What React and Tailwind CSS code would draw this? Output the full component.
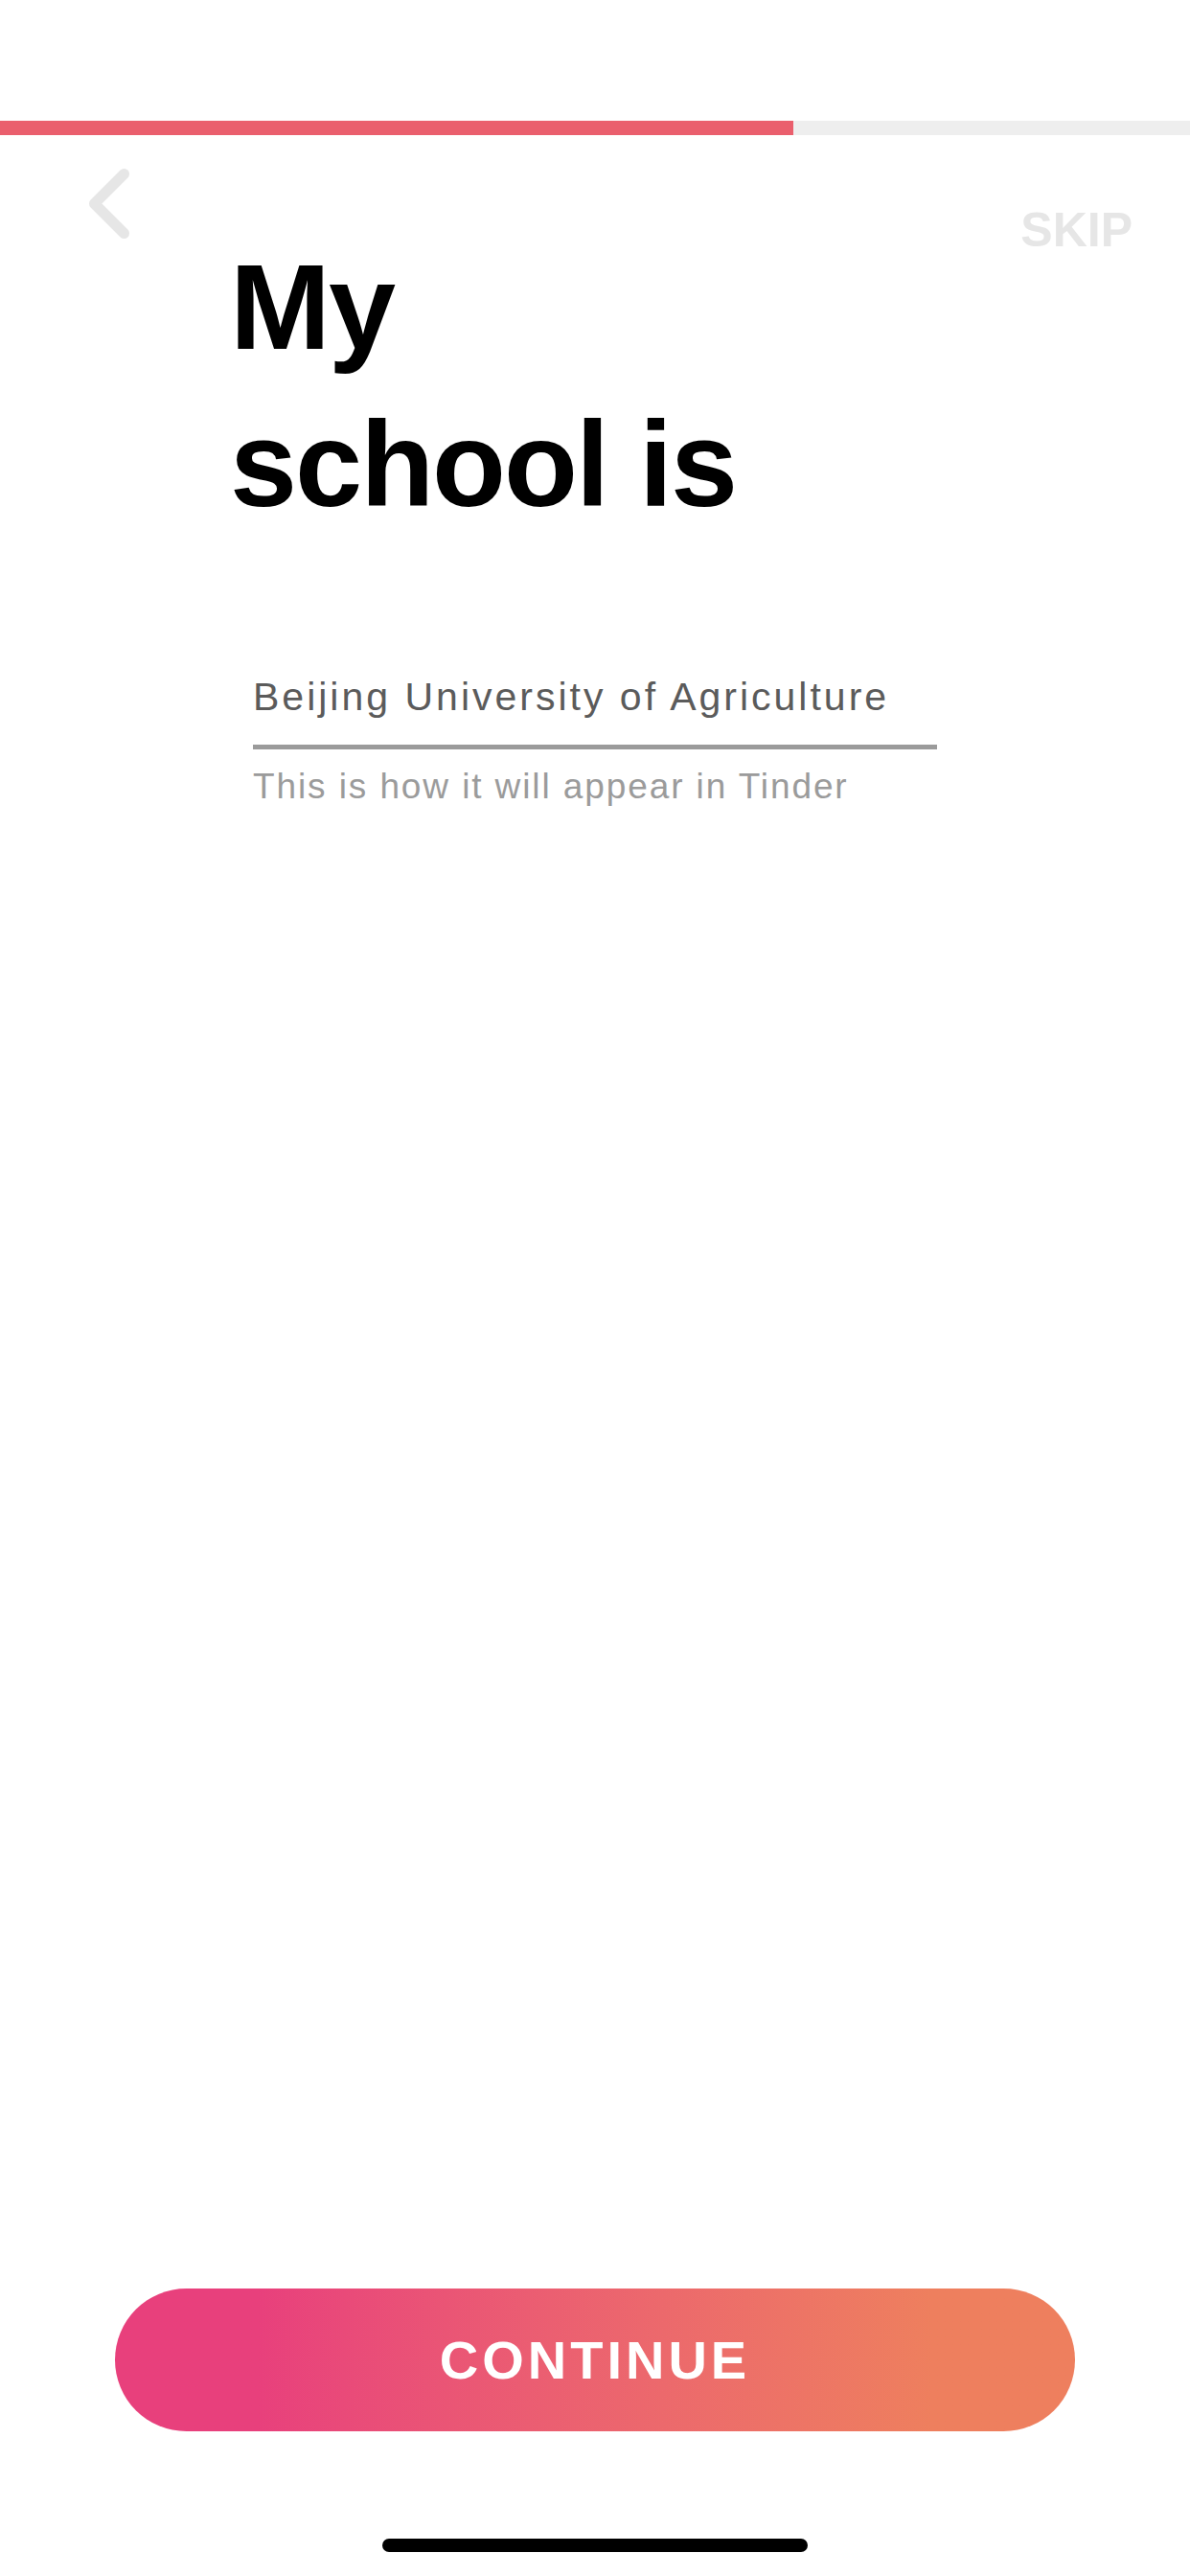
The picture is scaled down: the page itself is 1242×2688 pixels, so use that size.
import React from 'react';

export default function App() {
  const progress = 828;

  return (
    <div className="w-[1242px] h-[2688px] bg-white flex flex-col font-['Liberation_Sans',Arial,sans-serif] overflow-hidden">
      {/* status bar space */}
      <div className="h-[126px] shrink-0" />

      {/* progress */}
      <div className="flex h-[15px] shrink-0">
        <div className="bg-[#ea5f6d]" style={{ width: progress }} />
        <div className="flex-1 bg-[#eeeeee]" />
      </div>

      {/* header + title */}
      <div className="flex items-start">
        <button className="ml-[88px] mt-[31px] shrink-0">
          <svg width="50" height="80" viewBox="0 0 50 80" fill="none">
            <polyline
              points="41.5,9.5 10.5,40.5 41.5,71.5"
              stroke="#e6e6e6"
              strokeWidth="11"
              strokeLinecap="round"
              strokeLinejoin="round"
            />
          </svg>
        </button>

        <h1 className="ml-[102px] mt-[98px] flex-1 text-[126px] leading-[164px] font-bold tracking-[-2px] text-black">
          My
          <br />
          school is
        </h1>

        <div className="mt-[74px] mr-[60px] text-[50px] leading-none font-bold text-[#e6e6e6]">SKIP</div>
      </div>

      {/* school input */}
      <div className="ml-[264px] mt-[136px] w-[714px] flex flex-col">
        <div className="pb-[26px] border-b-[5px] border-[#9b9b9b]">
          <div className="text-[41px] leading-[48px] tracking-[3px] text-[#5b5b5b]">
            Beijing University of Agriculture
          </div>
        </div>
        <div className="mt-[17px] text-[37px] leading-[44px] tracking-[1.9px] text-[#9b9b9b]">
          This is how it will appear in Tinder
        </div>
      </div>

      {/* continue */}
      <button className="mt-auto mx-[120px] h-[149px] rounded-full bg-linear-to-r from-[#e8407c] from-[15%] to-[#ee7f5e] to-[85%] flex items-center justify-center shrink-0">
        <span className="text-[56px] leading-none font-bold tracking-[4px] text-white">CONTINUE</span>
      </button>

      {/* home indicator */}
      <div className="mt-[112px] mb-[25px] mx-auto w-[444px] h-[14px] rounded-full bg-black shrink-0" />
    </div>
  );
}
